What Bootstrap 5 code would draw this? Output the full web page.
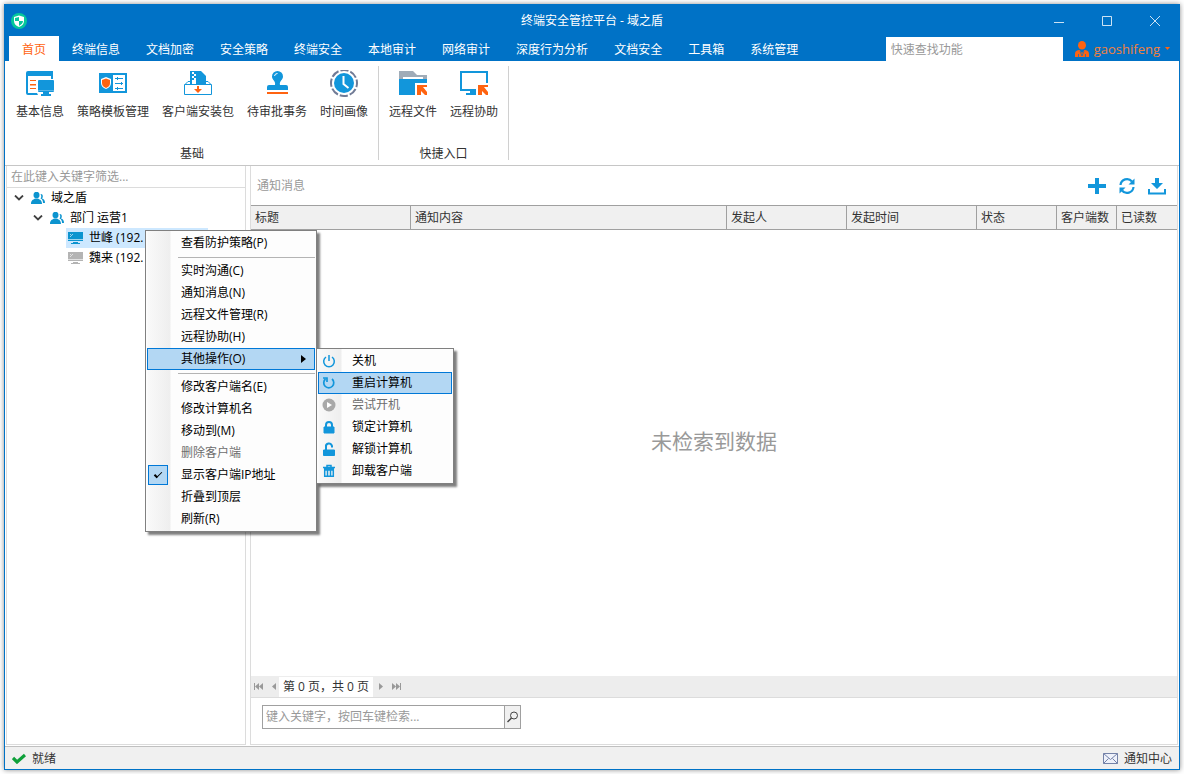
<!DOCTYPE html>
<html lang="zh-CN">
<head>
<meta charset="utf-8">
<meta name="viewport" content="width=device-width, initial-scale=1">
<title>终端安全管控平台 - 域之盾</title>
<link href="https://cdn.jsdelivr.net/npm/bootstrap@5.3.0/dist/css/bootstrap.min.css" rel="stylesheet">
<style>
:root{--brand:#0072c6;--icon:#1296db;--accent:#ff6310;--ink:#333;--rule:#a0a0a0;--soft:#dcdcdc}
body{font-family:"Open Sans","Noto Sans CJK SC",sans-serif;font-size:12px;line-height:16px;color:var(--ink);background:#fff;padding:4px;min-height:100vh}
button,input{font:inherit;color:inherit}
button{background:none;border:0;padding:0}
svg{display:block;flex:none}
.app-window{min-height:calc(100vh - 8px);border:1px solid var(--brand);box-shadow:0 0 5px rgba(0,0,0,.45)}
.brand-bg{background:var(--brand);color:#fff}
.title-bar{height:31px}
.title-side{flex:1 1 0}
.win-btn{width:48px;height:31px;display:grid;place-items:center}
.tab-strip{height:25px;padding-left:4px}
.tab-link{padding:0 13px;line-height:27px;height:25px;color:#fff;text-decoration:none;white-space:nowrap}
.tab-link.active{background:#fff;color:var(--accent)}
.quick-find{width:177px;height:24px;border:0;padding:0 5px;border-radius:0;background:#fff}
::placeholder{color:#999!important;opacity:1}
.user-btn{color:#f08040;font-size:13px;padding:0 9px 0 12px;gap:5px}
.ribbon{height:105px;border-bottom:1px solid #c6c6c6;padding-left:1px}
.ribbon-group{margin:5px 0;padding:4px 10px 0;border-right:1px solid #d0d0d0}
.ribbon-items{gap:13px}
.ribbon-btn{display:flex;flex-direction:column;align-items:center;gap:6px;white-space:nowrap}
.ribbon-title{margin-top:auto;text-align:center;line-height:18px;height:15px}
.work-area{padding:0 1px 1px;gap:4px}
.side-panel{width:240px;border:1px solid var(--soft);border-top:0;color:#000}
.filter-box{height:22px;border:0;border-bottom:1px solid var(--soft);padding:0 4px;width:100%}
.tree,.tree ul{list-style:none;margin:0;padding:0}
.tree ul{padding-left:19px}
.tree-row{height:20px;padding-left:7px;gap:6px}
.tree-twist{width:10px}
.tree-twist+svg{margin-left:1px}
.leaf{width:142px;height:20px;gap:6px;margin-left:21px;padding-left:2px}
.leaf.selected{background:#cde8ff}
.main-panel{border:1px solid var(--soft);border-top:0;min-width:0}
.panel-head{height:39px;padding:0 11px 0 6px;color:#999}
.panel-tools{gap:12px}
.grid-table{width:100%;table-layout:fixed;border-collapse:separate;border-spacing:0}
.grid-table th{height:25px;padding:0 4px;font-weight:400;background:#f0f0f0;border:1px solid var(--rule);border-left:0;white-space:nowrap}
.grid-table th:last-child{border-right:0}
.empty-note{font-size:21px;line-height:28px;color:#999;padding-bottom:24px}
.pager{height:22px;background:#ededed;border-bottom:1px solid var(--soft);padding-left:2px}
.pager-text{background:#fff;width:94px;height:20px;line-height:20px;text-align:center;margin:0 6px 0 3px}
.search-area{height:46px;padding:7px 11px}
.search-group{width:259px;height:24px;border:1px solid var(--rule)}
.search-group input{border:0;padding:0 3px;min-width:0}
.search-group button{width:16px;background:#f0f0f0;border-left:1px solid var(--rule);display:grid;place-items:center}
.status-bar{height:23px;border-top:1px solid #c0c0c0;background:#f0f0f0;padding:1px 7px 0}
.status-item{gap:6px}
/* context menus float above the tree and the grid */
.tree .popup{position:absolute;background:linear-gradient(90deg,#fdfdfd 1px,#f9f9f9 2px,#eee 24px,#fdfdfd 25px);border:1px solid #808080;padding:1px;box-shadow:3px 3px 2px rgba(0,0,0,.5);color:#000;z-index:5}
.tree .popup-main{width:172px;left:100px;top:2px}
.tree .popup-sub{width:138px;left:calc(100% + 1px);top:0}
.popup li{position:relative}
.popup button,.popup label{display:flex;align-items:center;width:100%;height:22px;text-align:left;border:1px solid transparent;padding:0 8px 0 33px}
.popup-sub button{padding-left:3px;gap:16px}
.popup button.hot{background:#b3d7f3;border-color:#0078d7}
.popup button:disabled{color:#6d6d6d}
.popup .rule{height:6px;padding:3px 0 0 31px}
.popup .rule::before{content:"";display:block;border-top:1px solid #b4b4b4}
.popup label{padding-left:0;gap:13px}
.popup input{appearance:none;margin:0;width:20px;height:20px;border:1px solid #0078d7;background:#b3d7f3;display:grid;place-items:center}
.popup input:checked::before{content:"";width:8px;height:4px;border:solid #000;border-width:0 0 1px 2px;transform:rotate(-45deg);margin-bottom:3px}
</style>
</head>
<body>
<div class="app-window d-flex flex-column">
  <header class="brand-bg">
    <div class="title-bar d-flex align-items-center">
      <div class="title-side">
        <svg class="ms-1" width="20" height="16" viewBox="-2 0 20 16"><circle cx="8" cy="8" r="8" fill="#06c89b"/><path d="M8 2.500l5 1.500v4c0 3-2 4.700-5 6-3-1.300-5-3-5-6V4z" fill="#fff"/><path d="M8 4V8H4V5zM8 8h4c0 2-1.500 3.500-4 5z" fill="#06c89b"/></svg>
      </div>
      <div>终端安全管控平台 - 域之盾</div>
      <div class="title-side d-flex justify-content-end">
        <button class="win-btn" type="button" aria-label="最小化"><svg width="10" height="10" stroke="#fff"><path d="M0 6.500h10" opacity=".8"/></svg></button>
        <button class="win-btn" type="button" aria-label="最大化"><svg width="10" height="10" fill="none" stroke="#fff"><path d="M.5.5h9v9h-9z" opacity=".8"/></svg></button>
        <button class="win-btn" type="button" aria-label="关闭"><svg width="12" height="12" stroke="#fff"><path d="M1 1l10 10M11 1L1 11" opacity=".8"/></svg></button>
      </div>
    </div>
    <div class="tab-strip d-flex align-items-end">
      <nav class="d-flex flex-fill" aria-label="主菜单">
        <a class="tab-link active" href="#">首页</a><a class="tab-link" href="#">终端信息</a><a class="tab-link" href="#">文档加密</a><a class="tab-link" href="#">安全策略</a><a class="tab-link" href="#">终端安全</a><a class="tab-link" href="#">本地审计</a><a class="tab-link" href="#">网络审计</a><a class="tab-link" href="#">深度行为分析</a><a class="tab-link" href="#">文档安全</a><a class="tab-link" href="#">工具箱</a><a class="tab-link" href="#">系统管理</a>
      </nav>
      <input class="quick-find" type="text" placeholder="快速查找功能" aria-label="快速查找功能">
      <button class="user-btn d-flex align-items-center h-100" type="button">
        <svg width="14" height="16" viewBox="0 0 14 16" fill="#ff6310"><ellipse cx="7" cy="4.300" rx="4" ry="4.300"/><path d="M0 16v-3c0-3 2-4 4.500-4L7 12l2.500-3C12 9 14 10 14 13v3z"/><path d="M5 10l2 5 2-5M3.500 13v3M10.500 13v3" stroke="#0072c6" stroke-width=".7" fill="none"/></svg>
        <span>gaoshifeng</span>
        <svg width="5" height="3"><path d="M0 0h5L2.500 3z" fill="#ff6310"/></svg>
      </button>
    </div>
  </header>

  <section class="ribbon d-flex">
    <div class="ribbon-group d-flex flex-column">
      <div class="ribbon-items d-flex">
        <button class="ribbon-btn" type="button"><svg width="28" height="28" viewBox="0 0 28 28" fill="#1296db"><path d="M0 3q0-2 2-2h25v8h-2V6H2v17h9l1 2H2q-2 0-2-2z"/><path d="M12 11q0-1 1-1h14q1 0 1 1v10q0 1-1 1H13q-1 0-1-1zM17 22h6v2h2v2H15v-2h2z"/><path d="M12 20h16v1H12z" fill="#fff" opacity=".3"/><path d="M4 10h6v1H4zM4 14h6v1.500H4zM4 18h6v1H4z" fill="#ff6310"/></svg>基本信息</button>
        <button class="ribbon-btn" type="button"><svg width="28" height="28" viewBox="0 0 28 28"><path d="M0 3h28v20H0z" fill="#1296db"/><path d="M14 5h12v16H14z" fill="#fff"/><path d="M7 7l5 2v4c0 3-2 5-5 6-3-1-5-3-5-6V9z" fill="#fff"/><path d="M7 8.500l4 1.500v3c0 2-1 4-4 5-3-1-4-3-4-5v-3z" fill="#ff6310"/><path d="M16 8.500h8M16 13.500h8M16 18.500h8M18.500 7v3M22.500 12v3M18.500 17v3" stroke="#1296db"/></svg>策略模板管理</button>
        <button class="ribbon-btn" type="button"><svg width="28" height="28" viewBox="0 0 28 28"><path d="M6 1h11l5 5v8H6z" fill="#1296db"/><path d="M8 2h2v2H8zM10 4h2v2h-2zM8 6h2v2H8zM10 8h2v2h-2zM8 10h4v4H8z" fill="#fff"/><path d="M6 11.500H4L.5 15v9.500h27V15L24 11.500h-2M.5 14.500h27" fill="none" stroke="#1296db"/><path d="M1 15h26v9H1z" fill="#fff"/><path d="M13 16h2v3h3l-4 4-4-4h3z" fill="#ff6310"/></svg>客户端安装包</button>
        <button class="ribbon-btn" type="button"><svg width="28" height="28" viewBox="0 0 28 28" fill="#1296db"><path d="M12 15c1-4-3-5-3-8.500a5.500 5.500 0 0 1 11 0C20 10 16 11 17 15h6q2 0 2 2v3H4v-3q0-2 2-2z"/><path d="M4 22h21v2H4z" fill="#ff6310"/><path d="M11.500 6a3 3 0 0 1 3-2.500" stroke="#fff" fill="none"/></svg>待审批事务</button>
        <button class="ribbon-btn" type="button"><svg width="28" height="28" viewBox="0 0 28 28"><circle cx="14" cy="13" r="10" fill="#1296db"/><circle cx="14" cy="13" r="13" fill="none" stroke="#717b96" stroke-width="2" stroke-dasharray="8.200 2" stroke-dashoffset="4"/><path d="M13.500 6v8l5 4" fill="none" stroke="#fff" stroke-width="2"/></svg>时间画像</button>
      </div>
      <div class="ribbon-title">基础</div>
    </div>
    <div class="ribbon-group d-flex flex-column">
      <div class="ribbon-items d-flex">
        <button class="ribbon-btn" type="button"><svg width="28" height="28" viewBox="0 0 28 28"><path d="M0 1h14l4 4h10v5H0z" fill="#a0acb8"/><path d="M4 7h20v2H4z" fill="#fff"/><path d="M0 9h28v4H16v12H0z" fill="#1296db"/><path d="M18 15h10v2h-4l4 5v3h-2l-4-4v4h-4z" fill="#ff6310"/></svg>远程文件</button>
        <button class="ribbon-btn" type="button"><svg width="28" height="28" viewBox="0 0 28 28"><path d="M27 13V2H1v18h15" fill="none" stroke="#1296db" stroke-width="2"/><path d="M10 19h6v6H6v-2h4z" fill="#1296db"/><path d="M18 15h10v2h-4l4 5v3h-2l-4-4v4h-4z" fill="#ff6310"/></svg>远程协助</button>
      </div>
      <div class="ribbon-title">快捷入口</div>
    </div>
  </section>

  <main class="work-area d-flex flex-fill">
    <aside class="side-panel flex-shrink-0">
      <input class="filter-box" type="text" placeholder="在此键入关键字筛选..." aria-label="筛选">
      <ul class="tree">
        <li>
          <div class="tree-row d-flex align-items-center">
            <svg class="tree-twist" width="10" height="6" fill="none" stroke="#404040" stroke-width="1.800"><path d="M1 .5l4 4 4-4"/></svg>
            <svg width="14" height="12" viewBox="0 0 14 12" fill="#0c94cf"><ellipse cx="5.500" cy="3" rx="3" ry="3.200"/><path d="M0 12c0-4 2-4 4-5.500h3c2 1.500 4 1.500 4 5.500zM9.500 2c2.500-.5 3 3 1.500 4.500 2 .8 3 1.500 3 4.500h-2c0-3-1-3.700-2.500-4.500 1-1.500 1-3 0-4.500z"/></svg>
            <span>域之盾</span>
          </div>
          <ul>
            <li>
              <div class="tree-row d-flex align-items-center">
                <svg class="tree-twist" width="10" height="6" fill="none" stroke="#404040" stroke-width="1.800"><path d="M1 .5l4 4 4-4"/></svg>
                <svg width="14" height="12" viewBox="0 0 14 12" fill="#0c94cf"><ellipse cx="5.500" cy="3" rx="3" ry="3.200"/><path d="M0 12c0-4 2-4 4-5.500h3c2 1.500 4 1.500 4 5.500zM9.500 2c2.500-.5 3 3 1.500 4.500 2 .8 3 1.500 3 4.500h-2c0-3-1-3.700-2.500-4.500 1-1.500 1-3 0-4.500z"/></svg>
                <span>部门 运营1</span>
              </div>
              <ul>
                <li class="position-relative">
                  <div class="leaf selected d-flex align-items-center">
                    <svg width="15" height="12"><path d="M0 0h15v9H0zM5 10h5v1h2v1H3v-1h2z" fill="#0c94cf"/><path d="M0 7.500h15M2 5l3-3M2 3l1-1" stroke="#fff" opacity=".6"/></svg>
                    <span>世峰 (192.</span>
                  </div>
                  <ul class="popup popup-main" role="menu">
                    <li><button type="button">查看防护策略(P)</button></li>
                    <li class="rule" role="separator"></li>
                    <li><button type="button">实时沟通(C)</button></li>
                    <li><button type="button">通知消息(N)</button></li>
                    <li><button type="button">远程文件管理(R)</button></li>
                    <li><button type="button">远程协助(H)</button></li>
                    <li>
                      <button class="hot" type="button" aria-expanded="true">其他操作(O)<svg class="ms-auto" width="5" height="8"><path d="M0 0l5 4-5 4z"/></svg></button>
                      <ul class="popup popup-sub" role="menu">
                        <li><button type="button"><svg width="14" height="14" fill="none" stroke="#1296db" stroke-width="1.500"><path d="M4 3a5.300 5.300 0 1 0 6 0M7 1v6"/></svg>关机</button></li>
                        <li><button class="hot" type="button"><svg width="14" height="14" fill="none" stroke="#1296db" stroke-width="1.700"><path d="M10 3a5 5 0 1 1-6.500 0M1 2h4v4"/></svg>重启计算机</button></li>
                        <li><button type="button" disabled><svg width="14" height="14"><circle cx="7" cy="7" r="6.500" fill="#a8a8a8"/><path d="M5 4l5 3-5 3z" fill="#fff"/></svg>尝试开机</button></li>
                        <li><button type="button"><svg width="14" height="14"><path d="M2 7h10v6H2z" fill="#1296db" stroke="#1296db"/><path d="M4 7V5a3 3 0 0 1 6 0v2" fill="none" stroke="#1296db" stroke-width="2"/></svg>锁定计算机</button></li>
                        <li><button type="button"><svg width="14" height="14"><path d="M1.500 8h11v5.500h-11z" fill="#1296db" stroke="#1296db"/><path d="M4 8V5a3 3 0 0 1 6-1v1.500" fill="none" stroke="#1296db" stroke-width="2"/></svg>解锁计算机</button></li>
                        <li><button type="button"><svg width="14" height="14" fill="none" stroke="#1296db" stroke-width="1.500"><path d="M1 3.500h12M5 3V1.500h4V3M2.700 5v7.200h8.600V5zM5.500 6v6M8.500 6v6M2.500 6h9"/></svg>卸载客户端</button></li>
                      </ul>
                    </li>
                    <li class="rule" role="separator"></li>
                    <li><button type="button">修改客户端名(E)</button></li>
                    <li><button type="button">修改计算机名</button></li>
                    <li><button type="button">移动到(M)</button></li>
                    <li><button type="button" disabled>删除客户端</button></li>
                    <li><label for="showIp"><input id="showIp" type="checkbox" checked>显示客户端IP地址</label></li>
                    <li><button type="button">折叠到顶层</button></li>
                    <li><button type="button">刷新(R)</button></li>
                  </ul>
                </li>
                <li>
                  <div class="leaf d-flex align-items-center">
                    <svg width="15" height="12"><path d="M0 0h15v9H0zM5 10h5v1h2v1H3v-1h2z" fill="#b4b4b4"/><path d="M0 7.500h15M2 5l3-3M2 3l1-1" stroke="#fff" opacity=".6"/></svg>
                    <span>魏来 (192.</span>
                  </div>
                </li>
              </ul>
            </li>
          </ul>
        </li>
      </ul>
    </aside>

    <section class="main-panel d-flex flex-column flex-fill">
      <div class="panel-head d-flex align-items-center justify-content-between">
        <span>通知消息</span>
        <div class="panel-tools d-flex">
          <button type="button" aria-label="新增"><svg width="18" height="18"><path d="M9 1v16M0 9h18" stroke="#1296db" stroke-width="4"/></svg></button>
          <button type="button" aria-label="刷新"><svg width="18" height="18" fill="none" stroke="#1296db" stroke-width="2.200"><path d="M2.500 8a6.500 6.500 0 0 1 11.500-3.500M15.500 10A6.500 6.500 0 0 1 4 13.500"/><path d="M16.500 1.500v6h-6zM1.500 16.500v-6h6z" fill="#1296db" stroke="none"/></svg></button>
          <button type="button" aria-label="下载"><svg width="18" height="18" fill="#1296db"><path d="M7 1h4v5h4l-6 6-6-6h4z"/><path d="M1 12v4.500h16V12" fill="none" stroke="#1296db" stroke-width="2"/></svg></button>
        </div>
      </div>
      <table class="grid-table">
        <colgroup><col width="160"><col><col width="120"><col width="130"><col width="80"><col width="60"><col width="60"></colgroup>
        <thead><tr><th>标题</th><th>通知内容</th><th>发起人</th><th>发起时间</th><th>状态</th><th>客户端数</th><th>已读数</th></tr></thead>
      </table>
      <div class="empty-note flex-fill d-flex align-items-center justify-content-center">未检索到数据</div>
      <div class="pager d-flex align-items-center">
        <button type="button" aria-label="第一页"><svg width="11" height="7" fill="#999"><path d="M1 0h1v7H1zM6 0v7L2 3.500zM10 0v7L6 3.500z"/></svg></button>
        <button class="ms-2" type="button" aria-label="上一页"><svg width="4" height="7" fill="#999"><path d="M4 0v7L0 3.500z"/></svg></button>
        <span class="pager-text">第 0 页，共 0 页</span>
        <button type="button" aria-label="下一页"><svg width="4" height="7" fill="#999"><path d="M0 0v7l4-3.500z"/></svg></button>
        <button class="ms-2" type="button" aria-label="最后一页"><svg width="11" height="7" fill="#999"><path d="M9 0h1v7H9zM1 0v7l4-3.500zM5 0v7l4-3.500z"/></svg></button>
      </div>
      <div class="search-area">
        <div class="search-group d-flex">
          <input class="flex-fill" type="text" placeholder="键入关键字，按回车键检索..." aria-label="检索">
          <button type="button" aria-label="搜索"><svg width="12" height="12" fill="none" stroke="#444"><circle cx="7" cy="4.500" r="3.500"/><path d="M4.500 7L.5 11" stroke-width="1.500"/></svg></button>
        </div>
      </div>
    </section>
  </main>

  <footer class="status-bar d-flex align-items-center justify-content-between">
    <div class="status-item d-flex align-items-center"><svg width="14" height="11"><path d="M1 5l4 4 8-7" fill="none" stroke="#0ea03a" stroke-width="3.200"/></svg><span>就绪</span></div>
    <button class="d-flex align-items-center gap-1" type="button"><svg width="17" height="12" fill="#eef1fa" stroke="#7482a8"><path d="M.5.5h14v10H.5z"/><path d="M.5.5l7 6 7-6M.5 10.500l5-5M14.500 10.500l-5-5" fill="none"/></svg>通知中心</button>
  </footer>
</div>
<script src="https://cdn.jsdelivr.net/npm/bootstrap@5.3.0/dist/js/bootstrap.bundle.min.js"></script>
</body>
</html>
